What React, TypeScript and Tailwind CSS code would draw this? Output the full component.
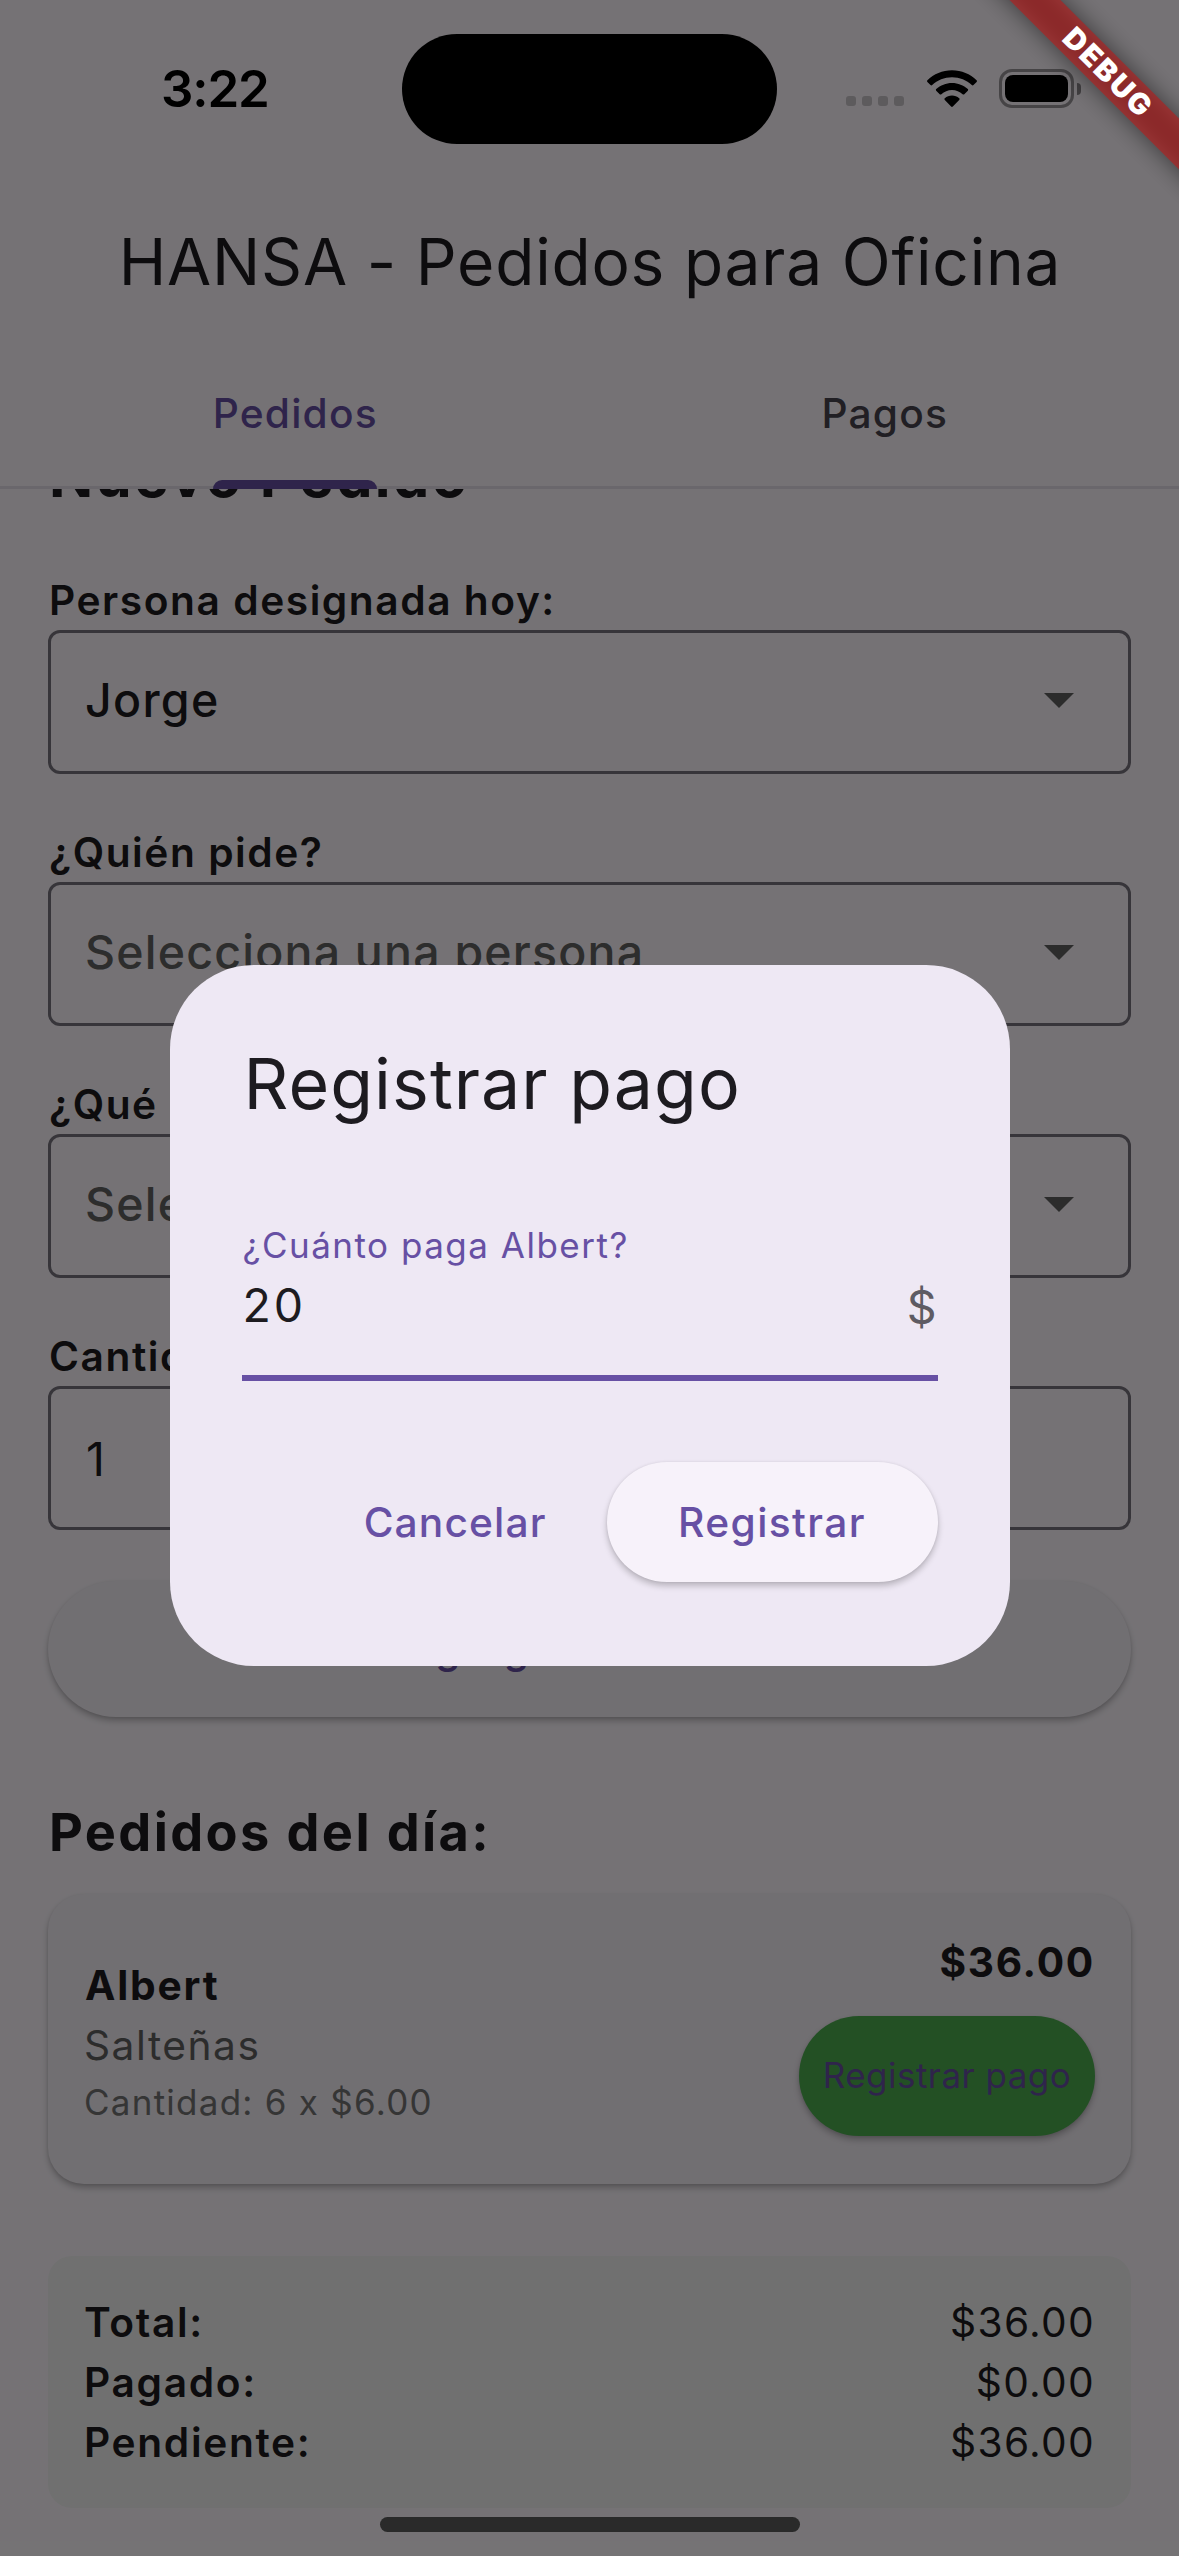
import type { ReactNode } from "react";

function StatusBar() {
  return (
    <div className="absolute inset-x-0 top-0 flex h-[177px] items-center">
      <div className="w-[402px] pl-[161px] text-[51px] leading-[60px] font-semibold tracking-[-1.16px] text-black">
        3:22
      </div>
      <div className="mt-px h-[110px] w-[375px] rounded-full bg-black" />
      <div className="flex flex-1 items-center pl-[69px]">
        <div className="mt-[25px] flex gap-[6px]">
          {[0, 1, 2, 3].map((i) => (
            <span key={i} className="size-[10px] rounded-[3px] bg-black/20" />
          ))}
        </div>
        <svg className="ml-[23px]" width="50" height="38" viewBox="0 0 50 38">
          <path d="M25 0.3C34.6 0.3 43.2 4 49.6 10.2c.5.5.5 1.2 0 1.7l-3.1 3.1c-.5.5-1.2.5-1.7 0C39.6 10.2 32.7 7.3 25 7.3S10.400 10.200 5.200 15c-.5.5-1.200.5-1.700 0L.4 11.900c-.5-.5-.5-1.200 0-1.700C6.800 4 15.400.3 25 .3Z" />
          <path d="M25 12.900c6 0 11.600 2.300 15.800 6.200.5.5.5 1.200 0 1.700l-3.500 3.500c-.5.4-1.200.4-1.700 0-2.800-2.600-6.500-4.200-10.600-4.200s-7.800 1.600-10.600 4.200c-.5.4-1.200.4-1.700 0l-3.500-3.500c-.5-.5-.5-1.200 0-1.700C13.400 15.200 19 12.900 25 12.900Z" />
          <path d="M25 25.600c2.700 0 5.200 1 7.200 2.700.5.4.5 1.100 0 1.600l-6.400 6.600c-.5.500-1.200.500-1.700 0l-6.300-6.600c-.5-.5-.5-1.200 0-1.600 1.900-1.700 4.500-2.700 7.200-2.700Z" />
        </svg>
        <div className="ml-[22px] flex items-center gap-[3px]">
          <div className="h-[39px] w-[75px] rounded-[13px] border-[3px] border-black/40 p-[3px]">
            <div className="size-full rounded-[8px] bg-black" />
          </div>
          <div className="h-[12px] w-[4px] rounded-r-full bg-black/45" />
        </div>
      </div>
    </div>
  );
}

function DebugBanner() {
  return (
    <div className="absolute top-0 right-0 size-[300px] overflow-hidden">
      <div className="absolute top-[54px] left-[28px] h-[36px] w-[400px] rotate-45">
        <div className="absolute inset-0 bg-black/50 blur-[12px]" />
        <div className="relative flex size-full items-center justify-center bg-[#b71c1c]/63 pl-[3px] text-[29.5px] leading-none font-black tracking-[2.2px] text-white">
          DEBUG
        </div>
      </div>
    </div>
  );
}

function Tab({ label, active }: { label: string; active?: boolean }) {
  return (
    <div className={`relative flex flex-1 items-center justify-center pb-[4px] pl-px text-[40.7px] font-medium tracking-[1.2px] ${active ? "text-[#6750a4]" : "text-[#49454f]"}`}>
      {label}
      {active && <span className="absolute bottom-[-3px] left-1/2 h-[9px] w-[164px] -translate-x-1/2 rounded-t-[9px] bg-[#6750a4]" />}
    </div>
  );
}

function Field({ label, children, arrow }: { label: string; children: ReactNode; arrow?: boolean }) {
  return (
    <div className="mb-12">
      <div className="h-[60px] pt-px pl-px text-[40.7px] leading-[60px] font-semibold tracking-[1.55px]">{label}</div>
      <div className="flex h-[144px] items-center justify-between rounded-[12px] border-[3px] border-[#79747e] pr-[33px] pl-[34px] text-[46.5px]">
        {children}
        {arrow && (
          <svg className="mr-[21px] mb-[3px]" width="30" height="15" viewBox="0 0 30 15">
            <path d="M0 0h30L15 15z" fill="#616161" />
          </svg>
        )}
      </div>
    </div>
  );
}

function SummaryRow({ label, value }: { label: string; value: string }) {
  return (
    <div className="flex justify-between text-[40.7px] leading-[60px]">
      <span className="font-semibold tracking-[1.65px]">{label}</span>
      <span className="tracking-[1.3px]">{value}</span>
    </div>
  );
}

function PaymentDialog() {
  return (
    <div className="absolute inset-0 flex items-center justify-center pt-[75px]">
      <div className="flex h-[701px] w-[840px] flex-col rounded-[84px] bg-[#eee8f4] px-[72px] pt-[71px]">
        <h2 className="pl-[2px] text-[69.8px] leading-[96px] tracking-[1.05px]">Registrar pago</h2>
        <div className="mt-[89px] border-b-[6px] border-[#6750a4] pb-[34px]">
          <div className="pl-px text-[35px] leading-[48px] tracking-[1.5px] text-[#6750a4]">¿Cuánto paga Albert?</div>
          <div className="flex h-[72px] justify-between pl-px text-[46.5px] leading-[72px]">
            <span className="tracking-[3px]">20</span>
            <span className="pt-[2px] pr-px text-[#5e5b63]">$</span>
          </div>
        </div>
        <div className="mt-[81px] flex items-center justify-end text-[40.7px] font-medium text-[#6750a4]">
          <button className="mr-[60px] pt-px tracking-[1.12px]">Cancelar</button>
          <button className="h-[120px] w-[331px] rounded-full bg-[#f7f2fa] pt-px tracking-[1.4px] shadow-[0_4px_6px_rgba(0,0,0,0.22),0_0_3px_rgba(0,0,0,0.08)]">
            Registrar
          </button>
        </div>
      </div>
    </div>
  );
}

export default function App() {
  return (
    <div className="relative flex h-[2556px] w-[1179px] flex-col overflow-hidden bg-[#fef9ff] font-['Inter',sans-serif] text-[#1d1b20]">
      <header className="h-[489px] shrink-0 pt-[177px]">
        <h1 className="flex h-[168px] items-center justify-center pt-[2px] pl-px text-[64px] tracking-[0.8px]">
          HANSA - Pedidos para Oficina
        </h1>
        <div className="flex h-[144px] border-b-[3px] border-[#e7e0ec]">
          <Tab label="Pedidos" active />
          <Tab label="Pagos" />
        </div>
      </header>

      <main className="flex-1 overflow-hidden px-12">
        <h2 className="mt-[-49px] mb-[58px] pl-px text-[58px] leading-[72px] font-bold tracking-[2.3px]">Nuevo Pedido</h2>
        <Field label="Persona designada hoy:" arrow>
          <span className="pb-[2px] font-medium tracking-[1.3px]">Jorge</span>
        </Field>
        <Field label="¿Quién pide?" arrow>
          <span className="pb-[2px] font-medium tracking-[1.2px] text-[#626262]">Selecciona una persona</span>
        </Field>
        <Field label="¿Qué pide?" arrow>
          <span className="pb-[2px] font-medium tracking-[1.2px] text-[#626262]">Selecciona un producto</span>
        </Field>
        <Field label="Cantidad:">
          <span className="pt-[4px] pl-px">1</span>
        </Field>
        <button className="mt-[51px] block h-[136px] w-full rounded-full bg-[#f6f1f8] pl-[3px] text-[40.7px] font-medium tracking-[1.45px] text-[#6750a4] shadow-[0_4px_6px_rgba(0,0,0,0.24),0_1px_3px_rgba(0,0,0,0.08)]">
          Agregar al Pedido
        </button>

        <h3 className="mt-[79px] pl-px text-[52.3px] leading-[72px] font-bold tracking-[2.38px]">Pedidos del día:</h3>
        <div className="mt-[26px] flex h-[290px] justify-between rounded-[36px] bg-[#f6f1f8] px-9 shadow-[0_4px_6px_rgba(0,0,0,0.24),0_1px_3px_rgba(0,0,0,0.08)]">
          <div className="pt-[62px]">
            <div className="pl-px text-[40.7px] leading-[60px] font-bold tracking-[1.8px]">Albert</div>
            <div className="text-[40.7px] leading-[60px] tracking-[1.5px] text-[#616161]">Salteñas</div>
            <div className="text-[35px] leading-[52px] tracking-[1.25px] text-[#757575]">Cantidad: 6 x $6.00</div>
          </div>
          <div className="flex flex-col items-end gap-[23px] pt-[39px]">
            <div className="text-[40.7px] leading-[60px] font-bold tracking-[1.7px]">$36.00</div>
            <button className="h-[120px] w-[296px] rounded-full bg-[#4caf50] pb-px text-[35px] tracking-[0.46px] text-[#6750a4] shadow-[0_4px_6px_rgba(0,0,0,0.24),0_1px_3px_rgba(0,0,0,0.08)]">
              Registrar pago
            </button>
          </div>
        </div>

        <div className="mt-[72px] h-[252px] rounded-[24px] bg-[#f5f5f5] px-9 pt-[37px]">
          <SummaryRow label="Total:" value="$36.00" />
          <SummaryRow label="Pagado:" value="$0.00" />
          <SummaryRow label="Pendiente:" value="$36.00" />
        </div>
      </main>

      <div className="absolute inset-0 bg-black/54" />
      <PaymentDialog />
      <StatusBar />
      <DebugBanner />
      <div className="absolute bottom-6 left-1/2 h-[15px] w-[420px] -translate-x-1/2 rounded-full bg-[#2a2a2a]" />
    </div>
  );
}
